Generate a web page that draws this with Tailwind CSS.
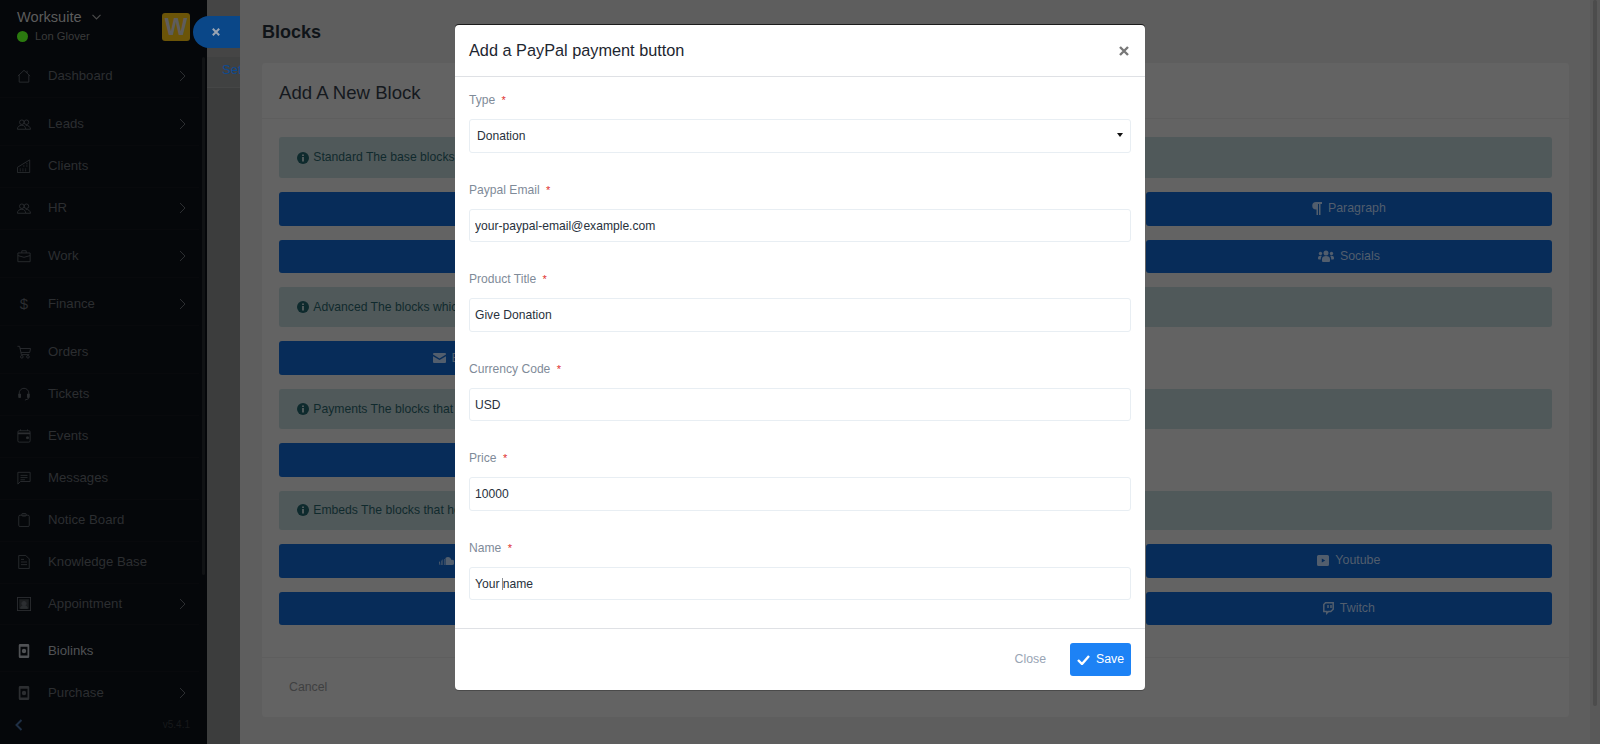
<!DOCTYPE html>
<html lang="en">
<head>
  <meta charset="UTF-8" />
  <title>Biolinks - Worksuite</title>
  <script src="https://cdn.jsdelivr.net/npm/@tailwindcss/browser@4"></script>
</head>

<body class="relative flex h-screen overflow-hidden bg-[#3c3d3d] font-['Liberation_Sans',Arial,sans-serif] text-[13.200px]">

  <!-- Sidebar -->
  <aside class="relative w-[207px] h-full flex flex-col bg-[#05070a] shrink-0">
    <div class="relative h-[55.500px] shrink-0 pl-[17px] pt-[7px]">
      <div class="flex items-center gap-[10px] text-[14.600px] leading-[20px] text-[#5c5c5c]">
        Worksuite
        <svg class="w-[9px] h-[6px]" viewBox="0 0 9 6" fill="none" stroke="#4a4a4a" stroke-width="1.200"><path d="M.5.8 4.500 4.800 8.500.8"/></svg>
      </div>
      <div class="flex items-center gap-[7px] mt-[2px] text-[11.200px] leading-[15px] text-[#3b3b3b]">
        <span class="w-[11px] h-[11px] rounded-full bg-[#2b7a0f]"></span>
        Lon Glover
      </div>
      <div class="absolute left-[162px] top-[13px] w-[28px] h-[28px] rounded-[3px] bg-[#6b5408] flex items-center justify-center text-[24px] font-bold text-[#5d5d5d]">W</div>
    </div>

    <nav class="flex-1 overflow-hidden pr-[8px] text-[#2c2e31]">
      <a class="flex items-center h-[42px] pl-[17px] pr-[13px] border-b border-[#08090c]">
        <svg class="w-[14px] h-[14px] shrink-0" viewBox="0 0 16 16" fill="none" stroke="currentColor"><path d="M1 8 8 1.500l7 6.500M2.500 7v8h11V7M11.500 2v2.500"/></svg>
        <span class="ml-[17px] flex-1">Dashboard</span>
        <svg class="w-[7px] h-[12px]" viewBox="0 0 7 12" fill="none" stroke="currentColor"><path d="m1 1 5 5-5 5"/></svg>
      </a>
      <a class="flex items-center h-[42px] mt-[6px] pl-[17px] pr-[13px] border-b border-[#08090c]">
        <svg class="w-[14px] h-[14px] shrink-0" viewBox="0 0 16 16" fill="none" stroke="currentColor"><circle cx="5.500" cy="6" r="2.600"/><circle cx="10.800" cy="6" r="2.600"/><path d="M.5 14c0-3 2-4.500 5-4.500s4 1.500 4.500 4.500zM10 9.500c3 0 5 1.500 5.500 4.500H10"/></svg>
        <span class="ml-[17px] flex-1">Leads</span>
        <svg class="w-[7px] h-[12px]" viewBox="0 0 7 12" fill="none" stroke="currentColor"><path d="m1 1 5 5-5 5"/></svg>
      </a>
      <a class="flex items-center h-[42px] pl-[17px] pr-[13px] border-b border-[#08090c]">
        <svg class="w-[14px] h-[14px] shrink-0" viewBox="0 0 16 16" fill="none" stroke="currentColor"><path d="M.5 15.500V9.500L14.500 1v14.500zM3 11.500h1.500M6 11.500h1.500M9 11.500h1.500M3 13.500h1.500M6 13.500h1.500M9 13.500h1.500M7 8h1.500M10.500 8H12M10.500 5.500H12"/></svg>
        <span class="ml-[17px] flex-1">Clients</span>
      </a>
      <a class="flex items-center h-[42px] pl-[17px] pr-[13px] border-b border-[#08090c]">
        <svg class="w-[14px] h-[14px] shrink-0" viewBox="0 0 16 16" fill="none" stroke="currentColor"><circle cx="5.500" cy="6" r="2.600"/><circle cx="10.800" cy="6" r="2.600"/><path d="M.5 14c0-3 2-4.500 5-4.500s4 1.500 4.500 4.500zM10 9.500c3 0 5 1.500 5.500 4.500H10"/></svg>
        <span class="ml-[17px] flex-1">HR</span>
        <svg class="w-[7px] h-[12px]" viewBox="0 0 7 12" fill="none" stroke="currentColor"><path d="m1 1 5 5-5 5"/></svg>
      </a>
      <a class="flex items-center h-[42px] mt-[6px] pl-[17px] pr-[13px] border-b border-[#08090c]">
        <svg class="w-[14px] h-[14px] shrink-0" viewBox="0 0 16 16" fill="none" stroke="currentColor"><path d="M1 4.500h14v10H1zM5.500 4.500V2h5v2.500M1 7.500l7 2 7-2"/></svg>
        <span class="ml-[17px] flex-1">Work</span>
        <svg class="w-[7px] h-[12px]" viewBox="0 0 7 12" fill="none" stroke="currentColor"><path d="m1 1 5 5-5 5"/></svg>
      </a>
      <a class="flex items-center h-[42px] mt-[6px] pl-[17px] pr-[13px] border-b border-[#08090c]">
        <span class="w-[14px] shrink-0 text-center text-[15px]">$</span>
        <span class="ml-[17px] flex-1">Finance</span>
        <svg class="w-[7px] h-[12px]" viewBox="0 0 7 12" fill="none" stroke="currentColor"><path d="m1 1 5 5-5 5"/></svg>
      </a>
      <a class="flex items-center h-[42px] mt-[6px] pl-[17px] pr-[13px] border-b border-[#08090c]">
        <svg class="w-[14px] h-[14px] shrink-0" viewBox="0 0 16 16" fill="none" stroke="currentColor"><path d="M.5 1.500h2.500l2 9.500h9M3.500 4h12l-1 4.500H4.500"/><circle cx="5.500" cy="13.500" r="1.500"/><circle cx="12.500" cy="13.500" r="1.500"/></svg>
        <span class="ml-[17px] flex-1">Orders</span>
      </a>
      <a class="flex items-center h-[42px] pl-[17px] pr-[13px] border-b border-[#08090c]">
        <svg class="w-[14px] h-[14px] shrink-0" viewBox="0 0 16 16" fill="none" stroke="currentColor"><path d="M2.500 10V7a5.500 5.500 0 0 1 11 0v3"/><path d="M2 8h2v4H2zM12 8h2v4h-2z" fill="currentColor"/><path d="M13 12v1.500L9 15"/></svg>
        <span class="ml-[17px] flex-1">Tickets</span>
      </a>
      <a class="flex items-center h-[42px] pl-[17px] pr-[13px] border-b border-[#08090c]">
        <svg class="w-[14px] h-[14px] shrink-0" viewBox="0 0 16 16" fill="none" stroke="currentColor"><rect x="1" y="2" width="14" height="13" rx="1.500"/><path d="M1 5h14" stroke-width="2"/><path d="M4 .5V2M12 .5V2"/><path d="M11 9h2v2h-2z" fill="currentColor"/></svg>
        <span class="ml-[17px] flex-1">Events</span>
      </a>
      <a class="flex items-center h-[42px] pl-[17px] pr-[13px] border-b border-[#08090c]">
        <svg class="w-[14px] h-[14px] shrink-0" viewBox="0 0 16 16" fill="none" stroke="currentColor"><path d="M1 1.500h14v10.500H4l-3 3zM4 5h8M4 7.500h8M4 10h5"/></svg>
        <span class="ml-[17px] flex-1">Messages</span>
      </a>
      <a class="flex items-center h-[42px] pl-[17px] pr-[13px] border-b border-[#08090c]">
        <svg class="w-[14px] h-[14px] shrink-0" viewBox="0 0 16 16" fill="none" stroke="currentColor"><rect x="2" y="2.500" width="12" height="13" rx="1.500"/><rect x="5.500" y=".5" width="5" height="3" rx="1"/></svg>
        <span class="ml-[17px] flex-1">Notice Board</span>
      </a>
      <a class="flex items-center h-[42px] pl-[17px] pr-[13px] border-b border-[#08090c]">
        <svg class="w-[14px] h-[14px] shrink-0" viewBox="0 0 16 16" fill="none" stroke="currentColor"><path d="M2 .5h8l4 4v11H2zM4.500 5H8M4.500 8h7M4.500 11h7"/></svg>
        <span class="ml-[17px] flex-1">Knowledge Base</span>
      </a>
      <a class="flex items-center h-[41px] pl-[17px] pr-[13px] border-b border-[#08090c]">
        <svg class="w-[14px] h-[14px] shrink-0" viewBox="0 0 16 16" fill="none" stroke="currentColor"><rect x=".5" y=".5" width="15" height="15"/><path d="M2.500 2.500h11v11h-11z" fill="#1c1e20" stroke="none"/><circle cx="8" cy="7.500" r="2.500" fill="currentColor"/><path d="M4 13c.5-2.500 2-3 4-3s3.500.5 4 3z" fill="currentColor"/></svg>
        <span class="ml-[17px] flex-1">Appointment</span>
        <svg class="w-[7px] h-[12px]" viewBox="0 0 7 12" fill="none" stroke="currentColor"><path d="m1 1 5 5-5 5"/></svg>
      </a>
      <a class="flex items-center h-[40px] mt-[7px] pl-[17px] pr-[13px] border-b border-[#08090c] text-[#505255]">
        <svg class="w-[14px] h-[14px] shrink-0" viewBox="0 0 16 16" fill="currentColor"><path d="M3.500 0h9A1.500 1.500 0 0 1 14 1.500v13a1.500 1.500 0 0 1-1.500 1.500h-9A1.500 1.500 0 0 1 2 14.500v-13A1.500 1.500 0 0 1 3.500 0zM4 3v10h8V3z"/><circle cx="8" cy="8" r="2.500"/></svg>
        <span class="ml-[17px] flex-1">Biolinks</span>
      </a>
      <a class="flex items-center h-[42px] pl-[17px] pr-[13px]">
        <svg class="w-[14px] h-[14px] shrink-0" viewBox="0 0 16 16" fill="currentColor"><path d="M3.500 0h9A1.500 1.500 0 0 1 14 1.500v13a1.500 1.500 0 0 1-1.500 1.500h-9A1.500 1.500 0 0 1 2 14.500v-13A1.500 1.500 0 0 1 3.500 0zM4 3v10h8V3z"/><circle cx="8" cy="8" r="2.500"/></svg>
        <span class="ml-[17px] flex-1">Purchase</span>
        <svg class="w-[7px] h-[12px]" viewBox="0 0 7 12" fill="none" stroke="currentColor"><path d="m1 1 5 5-5 5"/></svg>
      </a>
    </nav>

    <div class="h-[41px] shrink-0 flex items-center justify-between pl-[15px] pr-[17px] pt-[2px] bg-[#05070a]">
      <svg class="w-[8px] h-[12px]" viewBox="0 0 8 12" fill="none" stroke="#1f2f45" stroke-width="2"><path d="M6.500 1 1.500 6l5 5"/></svg>
      <span class="text-[10px] text-[#17191b]">v5.4.1</span>
    </div>
    <div class="absolute right-[2px] top-[57px] w-[3px] h-[518px] bg-[#101214] rounded-full"></div>
  </aside>

  <!-- Page behind the drawer -->
  <main class="flex-1">
    <div class="h-[57px] bg-[#454545]"></div>
    <div class="h-[31px] pl-[15px] overflow-hidden border-b border-[#454646] bg-[#404141] text-[13px] leading-[26px] text-[#0d4a92]">Settings</div>
  </main>

  <!-- Drawer close tab -->
  <div class="absolute left-[193px] top-[16px] w-[60px] h-[32px] pl-[19px] rounded-l-full flex items-center bg-[#0a4788] text-[#9aa5b3]">
    <svg class="w-[8px] h-[8px]" viewBox="0 0 8 8" stroke="currentColor" stroke-width="2"><path d="m.8.8 6.400 6.400M7.200.8.8 7.200"/></svg>
  </div>

  <!-- Drawer -->
  <section class="absolute left-[240px] right-0 top-0 bottom-0 flex bg-[#5e5e5e]">
    <div class="flex-1 pl-[22px] pr-[21px]">
      <h1 class="h-[63px] pt-[2px] flex items-center text-[18px] font-bold text-[#101418]">Blocks</h1>

      <div class="h-[654px] flex flex-col bg-[#636363] rounded-[3px]">
        <div class="h-[56px] shrink-0 pt-[4px] flex items-center px-[17px] border-b border-[#5e5e5e] text-[18.600px] text-[#15191e]">Add A New Block</div>

        <div class="flex-1 flex flex-col gap-[14px] pl-[17.250px] pr-[17px] pt-[18px]">
          <div class="h-[41px] flex items-center gap-[4px] pl-[18px] rounded-[3px] bg-[#50595a] text-[12.200px] text-[#102a2d]">
            <svg class="w-[12px] h-[12px]" viewBox="0 0 12 12"><circle cx="6" cy="6" r="6" fill="#0e2a2d"/><path d="M5 2.500h2v1.500H5zM5 5h2v4.500H5z" fill="#50595a"/></svg>
            Standard The base blocks which you can use on your biolink page.
          </div>
          <div class="grid grid-cols-3 gap-x-[27px] gap-y-[14px] text-[12.400px] text-[#525e6d]">
            <a class="h-[33.500px] flex items-center justify-center gap-[6px] rounded-[3px] bg-[#072c59]">Link</a>
            <a class="h-[33.500px] flex items-center justify-center gap-[6px] rounded-[3px] bg-[#072c59]">Heading</a>
            <a class="h-[33.500px] flex items-center justify-center gap-[6px] rounded-[3px] bg-[#072c59]">
              <svg class="w-[10px] h-[13px]" viewBox="0 0 10 13" fill="currentColor"><path d="M4 0h6v2H8.500v11H7V2H6v11H4.500V7.500H4A3.750 3.750 0 0 1 4 0z"/></svg>
              Paragraph
            </a>
            <a class="h-[33.500px] flex items-center justify-center gap-[6px] rounded-[3px] bg-[#072c59]">Avatar</a>
            <a class="h-[33.500px] flex items-center justify-center gap-[6px] rounded-[3px] bg-[#072c59]">Image</a>
            <a class="h-[33.500px] flex items-center justify-center gap-[6px] rounded-[3px] bg-[#072c59]">
              <svg class="w-[16px] h-[12px]" viewBox="0 0 16 12" fill="currentColor"><circle cx="8" cy="3" r="2.500"/><circle cx="2.500" cy="3.500" r="1.700"/><circle cx="13.500" cy="3.500" r="1.700"/><path d="M4 11V9c0-2 1.500-3 4-3s4 1 4 3v2a1 1 0 0 1-1 1H5a1 1 0 0 1-1-1zM0 8c0-1.500 1-2.300 2.500-2.300.6 0 1 .1 1.300.4C3 7 2.800 8 2.800 9.500H1a1 1 0 0 1-1-1zM16 8c0-1.500-1-2.300-2.500-2.300-.6 0-1 .1-1.300.4.800.9 1 1.900 1 3.400H15a1 1 0 0 0 1-1z"/></svg>
              Socials
            </a>
          </div>
          <div class="h-[40.250px] flex items-center gap-[4px] pl-[18px] rounded-[3px] bg-[#50595a] text-[12.200px] text-[#102a2d]">
            <svg class="w-[12px] h-[12px]" viewBox="0 0 12 12"><circle cx="6" cy="6" r="6" fill="#0e2a2d"/><path d="M5 2.500h2v1.500H5zM5 5h2v4.500H5z" fill="#50595a"/></svg>
            Advanced The blocks which add extra features to your biolink page.
          </div>
          <div class="grid grid-cols-3 gap-x-[27px] text-[12.400px] text-[#525e6d]">
            <a class="h-[33.500px] flex items-center justify-center gap-[6px] rounded-[3px] bg-[#072c59]">
              <svg class="w-[13px] h-[10px]" viewBox="0 0 13 10" fill="currentColor"><path d="M1 0h11a1 1 0 0 1 1 1v.6L6.500 5.500 0 1.600V1a1 1 0 0 1 1-1zM0 3.200l6.500 3.900L13 3.200V9a1 1 0 0 1-1 1H1a1 1 0 0 1-1-1z"/></svg>
              Email collector
            </a>
          </div>
          <div class="h-[40.250px] flex items-center gap-[4px] pl-[18px] rounded-[3px] bg-[#50595a] text-[12.200px] text-[#102a2d]">
            <svg class="w-[12px] h-[12px]" viewBox="0 0 12 12"><circle cx="6" cy="6" r="6" fill="#0e2a2d"/><path d="M5 2.500h2v1.500H5zM5 5h2v4.500H5z" fill="#50595a"/></svg>
            Payments The blocks that let you accept money from your visitors.
          </div>
          <div class="grid grid-cols-3 gap-x-[27px] text-[12.400px] text-[#525e6d]">
            <a class="h-[33.500px] flex items-center justify-center gap-[6px] rounded-[3px] bg-[#072c59]" aria-label="PayPal"></a>
          </div>
          <div class="h-[39.500px] flex items-center gap-[4px] pl-[18px] rounded-[3px] bg-[#50595a] text-[12.200px] text-[#102a2d]">
            <svg class="w-[12px] h-[12px]" viewBox="0 0 12 12"><circle cx="6" cy="6" r="6" fill="#0e2a2d"/><path d="M5 2.500h2v1.500H5zM5 5h2v4.500H5z" fill="#50595a"/></svg>
            Embeds The blocks that help you embed media from other sites.
          </div>
          <div class="grid grid-cols-3 gap-x-[27px] gap-y-[14px] text-[12.400px] text-[#525e6d]">
            <a class="h-[33.500px] flex items-center justify-center gap-[6px] rounded-[3px] bg-[#072c59]">
              <svg class="w-[15px] h-[8px]" viewBox="0 0 15 8" fill="currentColor"><path d="M0 5.500 1 4l.3 4H.6zM2 3.500h.6V8H2zM3.500 2.500h.6V8h-.6zM5 2h.6v6H5zM6.500 1C7.200.4 8 0 9 0c1.700 0 3 1.200 3.200 2.800.3-.1.500-.1.800-.1a2.650 2.650 0 0 1 0 5.300H6.500z"/></svg>
              Soundcloud
            </a>
            <a class="h-[33.500px] flex items-center justify-center gap-[6px] rounded-[3px] bg-[#072c59]">Spotify</a>
            <a class="h-[33.500px] flex items-center justify-center gap-[6px] rounded-[3px] bg-[#072c59]">
              <svg class="w-[12px] h-[11px]" viewBox="0 0 12 11" fill="currentColor"><path fill-rule="evenodd" d="M1.500 0h9A1.500 1.500 0 0 1 12 1.500v8a1.500 1.500 0 0 1-1.500 1.500h-9A1.500 1.500 0 0 1 0 9.500v-8A1.500 1.500 0 0 1 1.500 0zM4.800 3.500v4l3.400-2z"/></svg>
              Youtube
            </a>
            <a class="h-[33.500px] flex items-center justify-center gap-[6px] rounded-[3px] bg-[#072c59]">Vimeo</a>
            <a class="h-[33.500px] flex items-center justify-center gap-[6px] rounded-[3px] bg-[#072c59]">Tiktok</a>
            <a class="h-[33.500px] flex items-center justify-center gap-[6px] rounded-[3px] bg-[#072c59]">
              <svg class="w-[11px] h-[13px]" viewBox="0 0 11 13" fill="none" stroke="currentColor" stroke-width="1.500"><path d="M2.500.8h7.700v6.400L7.800 9.500H5.500L3.800 11.200V9.500H.8V2.500zM5 3v3M8 3v3"/></svg>
              Twitch
            </a>
          </div>
        </div>

        <div class="h-[60px] shrink-0 flex items-center px-[27px] border-t border-[#5e5e5e] text-[12.300px] text-[#3f4041]">Cancel</div>
      </div>
    </div>

    <!-- Scrollbar -->
    <div class="w-[10px] pl-[3px] bg-[#595959]">
      <div class="w-[4px] h-[706px] rounded-full bg-[#4c4c4c]"></div>
    </div>
  </section>

  <!-- Modal -->
  <div class="absolute left-[455px] top-[25px] w-[690px] h-[665px] flex flex-col bg-white rounded-[4px] shadow-[0_-1px_0_rgba(0,0,0,0.7),0_1px_0_rgba(0,0,0,0.25)]">
    <div class="h-[52px] shrink-0 flex items-center justify-between pl-[14px] pr-[16px] border-b border-[#dfe1e5]">
      <h2 class="text-[16.300px] text-[#1d2630]">Add a PayPal payment button</h2>
      <svg class="w-[10px] h-[10px]" viewBox="0 0 10 10" stroke="#777" stroke-width="2.400"><path d="m1 1 8 8M9 1 1 9"/></svg>
    </div>

    <form class="flex-1 pt-[12px] px-[14px] text-[12.100px] text-[#28313c]">
      <div class="mb-[26px]">
        <label class="block h-[20px] leading-[22px] mb-[10px] text-[#7f8b99]">Type <span class="ml-[3px] text-[11px] text-[#e03030]">*</span></label>
        <div class="relative">
          <select class="block w-full h-[33.500px] pl-[7px] pt-[1px] appearance-none bg-white border border-[#e8eef3] rounded-[3px]"><option>Donation</option></select>
          <span class="absolute right-[8px] top-[14px] border-x-[3.500px] border-t-[4px] border-x-transparent border-t-[#111]"></span>
        </div>
      </div>
      <div class="mb-[26px]">
        <label class="block h-[20px] leading-[22px] mb-[10px] text-[#7f8b99]">Paypal Email <span class="ml-[3px] text-[11px] text-[#e03030]">*</span></label>
        <input class="block w-full h-[33.500px] px-[5px] pt-[1px] border border-[#e8eef3] rounded-[3px]" value="your-paypal-email@example.com" />
      </div>
      <div class="mb-[26px]">
        <label class="block h-[20px] leading-[22px] mb-[10px] text-[#7f8b99]">Product Title <span class="ml-[3px] text-[11px] text-[#e03030]">*</span></label>
        <input class="block w-full h-[33.500px] px-[5px] pt-[1px] border border-[#e8eef3] rounded-[3px]" value="Give Donation" />
      </div>
      <div class="mb-[26px]">
        <label class="block h-[20px] leading-[22px] mb-[10px] text-[#7f8b99]">Currency Code <span class="ml-[3px] text-[11px] text-[#e03030]">*</span></label>
        <input class="block w-full h-[33.500px] px-[5px] pt-[1px] border border-[#e8eef3] rounded-[3px]" value="USD" />
      </div>
      <div class="mb-[26px]">
        <label class="block h-[20px] leading-[22px] mb-[10px] text-[#7f8b99]">Price <span class="ml-[3px] text-[11px] text-[#e03030]">*</span></label>
        <input class="block w-full h-[33.500px] px-[5px] pt-[1px] border border-[#e8eef3] rounded-[3px]" value="10000" />
      </div>
      <div class="relative">
        <label class="block h-[20px] leading-[22px] mb-[10px] text-[#7f8b99]">Name <span class="ml-[3px] text-[11px] text-[#e03030]">*</span></label>
        <input class="block w-full h-[33.500px] px-[5px] pt-[1px] border border-[#e8eef3] rounded-[3px]" value="Your name" />
        <span class="absolute left-[33px] top-[41px] w-px h-[12px] bg-[#8a8f96]"></span>
      </div>
    </form>

    <div class="h-[62px] shrink-0 flex items-center justify-end gap-[24px] px-[14px] border-t border-[#dfe1e5] text-[12.300px]">
      <button class="text-[#99a5b5]">Close</button>
      <button class="h-[33.500px] w-[61px] flex items-center justify-center gap-[6px] rounded-[3px] bg-[#1d82f5] text-white">
        <svg class="w-[13px] h-[10px]" viewBox="0 0 13 10" fill="none" stroke="currentColor" stroke-width="2.400"><path d="m1 5 4 4 7-8"/></svg>
        Save
      </button>
    </div>
  </div>

</body>
</html>
